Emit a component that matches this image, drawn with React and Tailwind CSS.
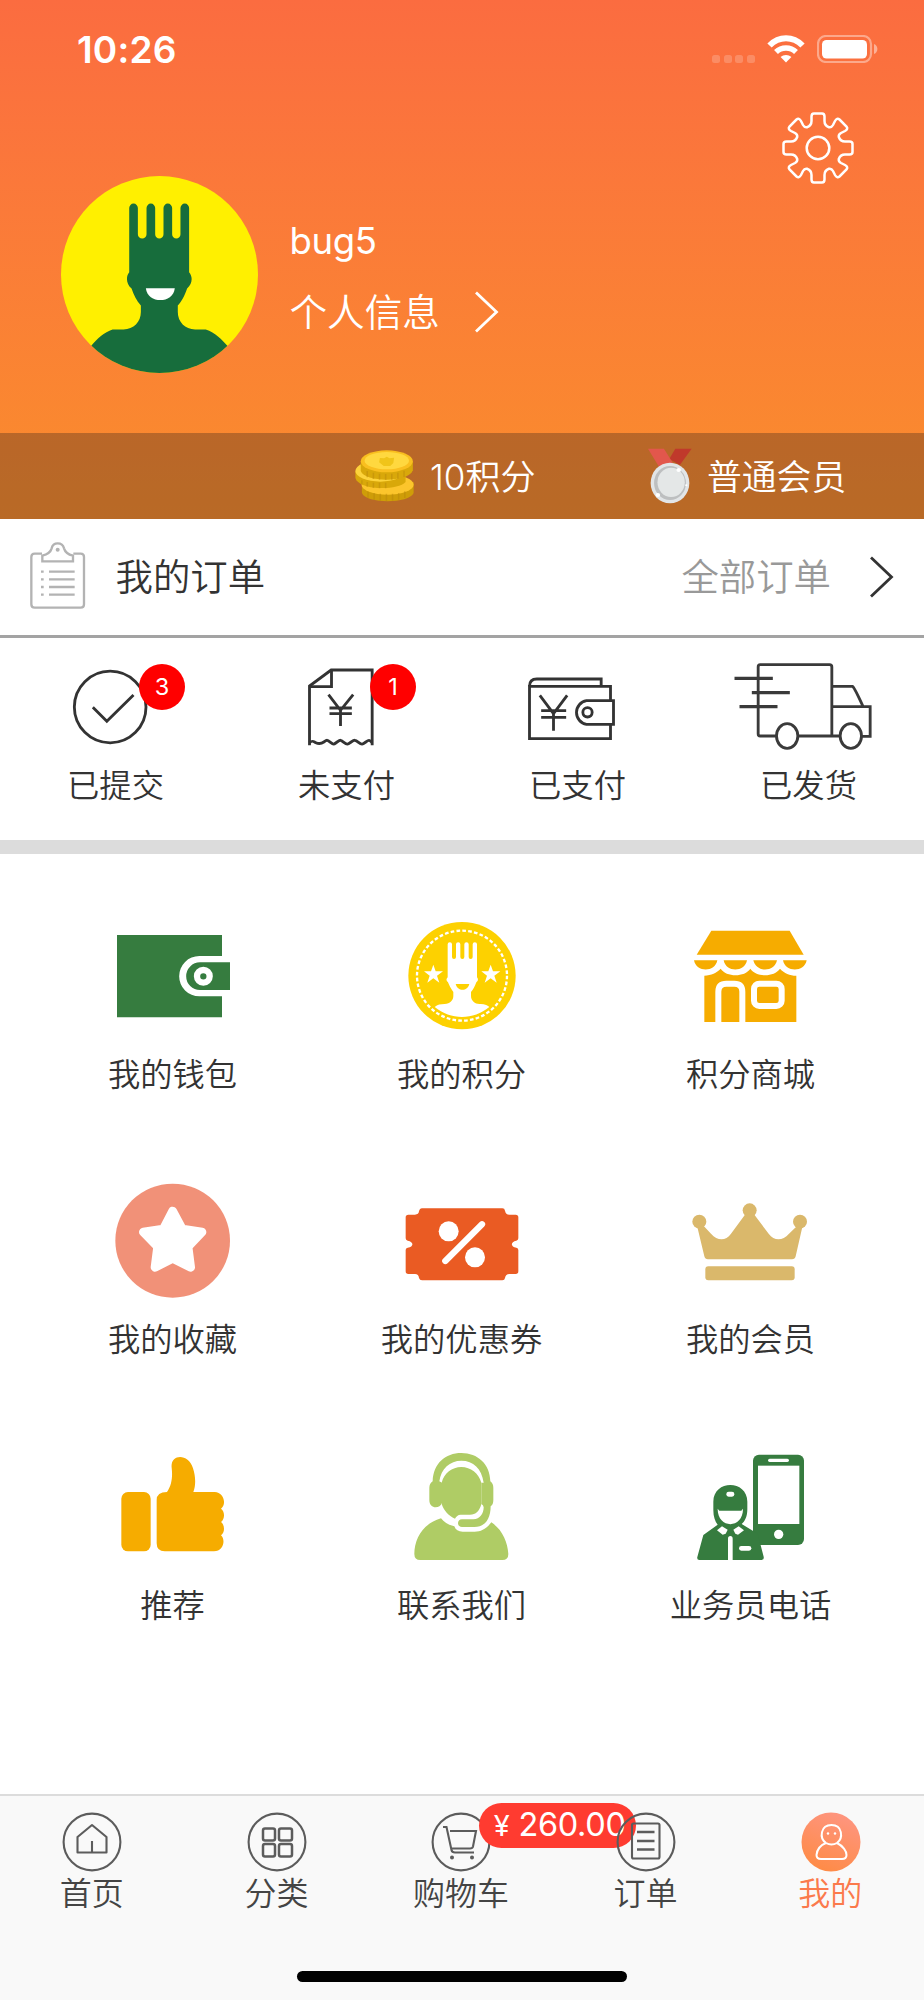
import clsx from "clsx";

/* ---------- header icons ---------- */

function WifiIcon() {
  return (
    <svg className="w-[38px] h-[28px]" viewBox="0 0 38 28" fill="none" stroke="white">
      <path d="M2.5 10.5 C12 0.8 26 0.8 35.5 10.5" strokeWidth="6" />
      <path d="M9 17 C14.5 11.5 23.5 11.5 29 17" strokeWidth="5.5" />
      <path d="M19 27.5 L13.6 22 C16.5 19.2 21.5 19.2 24.4 22 Z" fill="white" stroke="none" />
    </svg>
  );
}

function BatteryIcon() {
  return (
    <svg className="w-[61px] h-[28px]" viewBox="0 0 61 28" fill="none">
      <rect x="1" y="1" width="53" height="26" rx="8" stroke="white" strokeOpacity="0.4" strokeWidth="2.2" />
      <rect x="5" y="5" width="45" height="18.5" rx="4.5" fill="white" />
      <path d="M57 9 C61.5 10.5 61.5 17.5 57 19 Z" fill="white" fillOpacity="0.45" />
    </svg>
  );
}

function GearIcon() {
  return (
    <svg className="w-[74px] h-[74px]" viewBox="-37 -37 74 74" fill="none" stroke="white" strokeWidth="2.5">
      {[0, 90, 180, 270].map((deg) => (
        <path
          key={deg}
          transform={`rotate(${deg})`}
          d="M0 -34.5 H4 Q6.5 -34.5 6.5 -31.5 V-27 C6.5 -23.5 9 -21.5 11 -20.8 Q13.5 -20.3 15 -23 L17 -27 Q19 -30.5 21.5 -28.5 L28.5 -21.5 Q30.5 -19 27 -17 L23 -15 Q20.3 -13.5 20.8 -11 C21.5 -9 23.5 -6.5 27 -6.5 H31.5 Q34.5 -6.5 34.5 -4 V0"
        />
      ))}
      <circle r="11.3" />
    </svg>
  );
}

function Avatar() {
  return (
    <svg className="w-[197px] h-[197px]" viewBox="62 46 592 592">
      <clipPath id="avatar">
        <circle cx="358" cy="342" r="296" />
      </clipPath>
      <g clipPath="url(#avatar)">
        <rect x="62" y="46" width="592" height="592" fill="#fff000" />
        <path
          fill="#176d3c"
          d="M267 142 a13 13 0 0 1 26 0 V221 a13 13 0 0 0 26 0 V142 a13 13 0 0 1 26 0 V221 a12.5 13 0 0 0 25 0 V142 a13 13 0 0 1 26 0 V221 a12.5 13 0 0 0 25 0 V142 a13 13 0 0 1 26 0 V335 C458 347 458 370 441 384 C434 405 424 424 413 435 V455 C413 485 435 507 465 507 H497 C525 515 548 540 562 556 L600 650 H110 L153 556 C170 535 192 515 217 507 H250 C280 507 302 485 302 455 V435 C289 422 280 402 274 384 C257 370 257 347 267 335 Z"
        />
        <path fill="white" d="M317 383 H404 C399 431 322 431 317 383 Z" />
      </g>
    </svg>
  );
}

function Chevron({ className }) {
  return (
    <svg className={clsx("w-[25px] h-[42px]", className)} viewBox="0 0 25 42" fill="none" stroke="currentColor" strokeWidth="2.8">
      <path d="M2 1.5 L22.5 21 L2 40.5" />
    </svg>
  );
}

function CoinsIcon() {
  return (
    <svg className="w-[59px] h-[52px]" viewBox="90 89 154 156" preserveAspectRatio="none">
      {/* bottom coin */}
      <path d="M108 195 V218 C118 251 232 251 243 218 V185 Z" fill="#cf9d08" />
      <ellipse cx="175" cy="193" rx="68" ry="30" fill="#fcc52c" />
      {/* middle coin */}
      <path d="M91 152 V172 C98 210 200 212 222 185 V160 Z" fill="#d9a80a" />
      <ellipse cx="156" cy="152" rx="65" ry="32" fill="#fdd33c" />
      {/* top coin */}
      <path d="M105 124 V152 C115 187 232 187 241 150 V124 Z" fill="#d9a80a" />
      <ellipse cx="173" cy="123" rx="68" ry="33" fill="#f9bf1f" />
      <ellipse cx="173" cy="121" rx="58" ry="26" fill="#ffd83f" />
      <path d="M155 113 L166 114 L173 109 L180 114 L192 112 L190 128 L182 137 H165 L153 126 Z" fill="#f0c419" />
      <g stroke="#b8860b" strokeWidth="4" opacity="0.45">
        <path d="M122 152 V171 M138 157 V176 M154 160 V178 M170 161 V179 M186 160 V178 M202 157 V176 M218 151 V170" />
        <path d="M108 180 V192 M122 185 V199 M138 187 V203 M154 187 V204 M170 187 V204" />
        <path d="M124 214 V232 M140 218 V238 M156 220 V241 M172 220 V242 M188 220 V241 M204 218 V238 M220 213 V233" />
      </g>
    </svg>
  );
}

function MedalIcon() {
  return (
    <svg className="w-[44px] h-[56px]" viewBox="858 89 116 168" preserveAspectRatio="none">
      <path d="M930 91 H973 L942 140 L914 122 Z" fill="#c0392b" />
      <path d="M858 91 H900 L925 136 L887 145 Z" fill="#e2574c" />
      <ellipse cx="916" cy="194" rx="51" ry="61" fill="#e2e5e7" />
      <ellipse cx="916" cy="194" rx="42" ry="51" fill="#bdbfc0" />
      <ellipse cx="919" cy="192" rx="36" ry="44" fill="#e4e7e7" />
      <circle cx="939" cy="155" r="6" fill="white" />
      <circle cx="884" cy="230" r="6" fill="white" />
      <circle cx="959" cy="201" r="3" fill="white" />
    </svg>
  );
}

function ClipboardIcon() {
  return (
    <svg className="w-[58px] h-[70px]" viewBox="88 60 174 210" fill="none" stroke="#b3b3b3" strokeWidth="7">
      <path d="M127 98 H105 Q95 98 95 108 V250 Q95 260 105 260 H243 Q253 260 253 250 V108 Q253 98 243 98 H221" />
      <path d="M128 121 V104 C140 101 152 96 156 82 C160 62 188 62 193 82 C197 96 208 101 220 104 V121 Z" />
      <circle cx="174" cy="86" r="6" fill="#b3b3b3" stroke="none" />
      <path d="M148 152 H225 M148 175 H225 M148 198 H225 M148 221 H225" />
      <path d="M124 152 H132 M124 175 H132 M124 198 H132 M124 221 H132" />
    </svg>
  );
}

/* ---------- order status icons ---------- */

function SubmittedIcon() {
  return (
    <svg className="w-[150px] h-[100px]" viewBox="122.5 405 450 300" fill="none" stroke="#333" strokeWidth="8.5">
      <circle cx="330" cy="561" r="107.5" />
      <path d="M278 562 L320 604 L400 525" />
    </svg>
  );
}

function UnpaidIcon() {
  return (
    <svg className="w-[150px] h-[100px]" viewBox="816.5 405 450 300" fill="none" stroke="#333" strokeWidth="8.5">
      <path d="M929 676 V498 L994 450 H1117 V676" />
      <path d="M929 500 H995 V450" />
      <path d="M929 668 C938 660 940 664 948 668 S962 673 972 666 S982 659 992 667 S1002 673 1012 666 S1022 659 1032 667 S1044 673 1054 666 S1066 659 1076 667 S1088 673 1098 666 S1108 660 1117 668" />
      <path d="M986 524 L1022 571 L1060 524 M1022 571 V618 M989 564 H1056 M989 581 H1056" />
    </svg>
  );
}

function PaidIcon() {
  return (
    <svg className="w-[150px] h-[100px]" viewBox="123.5 405 450 300" fill="none" stroke="#333" strokeWidth="8.5">
      <path d="M446 541 V499 H203 V656 H446 V614" />
      <path d="M203 499 C203 484 212 477 225 477 H418 V499" />
      <path d="M455 542 H374 A36 36 0 0 0 374 613 H455 Z" />
      <circle cx="377" cy="577" r="14" />
      <path d="M234 526 L275 581 L316 526 M275 581 V632 M238 572 H313 M238 592 H313" />
    </svg>
  );
}

function ShippedIcon() {
  return (
    <svg className="w-[150px] h-[100px]" viewBox="814.5 407 450 300" fill="none" stroke="#3a3a3a" strokeWidth="8.5">
      <path d="M942 650 H893 Q887 650 887 643 V443 Q887 436 893 436 H1101 Q1108 436 1108 443 V650" />
      <path d="M1006 650 H1132 M1198 651 H1223 V562 H1110 M1110 501 H1170 Q1175 503 1201 560" />
      <ellipse cx="974" cy="650" rx="32" ry="37" />
      <ellipse cx="1165" cy="650" rx="32" ry="37" />
      <path d="M816 477 H931 M868 520 H982 M831 562 H945" strokeWidth="10" />
    </svg>
  );
}

/* ---------- menu icons ---------- */

function WalletIcon() {
  return (
    <svg className="size-[120px]" viewBox="69 48 360 360" fill="#367c3f">
      <path d="M81 105 H396 V168 H328 A60 60 0 0 0 328 289 H396 V352 H81 Z" />
      <path d="M420 187 H330 A41 41 0 0 0 330 270 H420 Z" />
      <circle cx="340" cy="229" r="19" fill="none" stroke="white" strokeWidth="19" />
    </svg>
  );
}

function PointsIcon() {
  return (
    <svg className="size-[120px]" viewBox="936 48 360 360">
      <circle cx="1116" cy="227" r="161" fill="#fdd100" />
      <circle cx="1116" cy="227" r="135" fill="none" stroke="white" strokeWidth="7" strokeDasharray="11 6.67" />
      <g fill="white">
        <path d="M1073 133 a6.5 6.5 0 0 1 13 0 V171 a6 6 0 0 0 12 0 V133 a6.5 6.5 0 0 1 13 0 V171 a6 6 0 0 0 12 0 V133 a6.5 6.5 0 0 1 13 0 V171 a6 6 0 0 0 12 0 V133 a6.5 6.5 0 0 1 13 0 V232 C1165 237 1165 242 1159 247 C1154 260 1150 268 1143 276 V288 C1143 302 1155 312 1168 312 C1183 311 1194 316 1198 321 C1150 361 1082 361 1034 321 C1042 314 1052 312 1064 312 C1080 312 1090 300 1090 288 V276 C1082 266 1077 254 1074 247 C1068 242 1068 237 1073 232 Z" />
        <path d="M1030 194 L1037 214 H1059 L1041 227 L1048 248 L1030 235 L1012 248 L1019 227 L1002 214 H1023 Z" />
        <path d="M1202 194 L1209 214 H1231 L1213 227 L1220 248 L1202 235 L1184 248 L1191 227 L1174 214 H1195 Z" />
      </g>
      <path d="M1097 252 H1138 C1133 275 1102 275 1097 252 Z" fill="#fdd100" />
    </svg>
  );
}

function StoreIcon() {
  return (
    <svg className="size-[120px]" viewBox="694 48 360 360" fill="#f6ac00">
      <path d="M755 92 H990 L1032 164 H711 Z" />
      <path d="M703 181 H773 C766 218 710 218 703 181 Z M792 181 H862 C855 218 799 218 792 181 Z M881 181 H952 C944 218 889 218 881 181 Z M970 181 H1041 C1034 218 977 218 970 181 Z" />
      <path d="M734 227 C755 226 771 218 783 206 C800 232 855 232 872 206 C890 232 943 232 961 206 C974 220 990 227 1010 227 V366 H734 Z" />
      <path d="M776 368 V275 Q776 251 800 251 H824 Q848 251 848 275 V368" fill="none" stroke="white" strokeWidth="18" />
      <rect x="883" y="251" width="83" height="67" rx="16" fill="none" stroke="white" strokeWidth="18" />
    </svg>
  );
}

function FavoriteIcon() {
  return (
    <svg className="size-[120px]" viewBox="69 65 360 360">
      <ellipse cx="248" cy="241" rx="172" ry="171" fill="#f19178" />
      <path
        d="M248 152 L277 206 L336 215 L294 259 L302 321 L248 294 L195 321 L203 259 L160 215 L220 206 Z"
        fill="white"
        stroke="white"
        strokeWidth="26"
        strokeLinejoin="round"
      />
    </svg>
  );
}

function CouponIcon() {
  return (
    <svg className="size-[120px]" viewBox="936 65 360 360">
      <path
        fill="#ea5b23"
        d="M996 144 H1237 Q1244 144 1245 151 Q1247 163 1258 163 H1277 Q1285 163 1285 171 V234 Q1285 240 1279 241 C1261 244 1261 259 1279 262 Q1285 263 1285 269 V333 Q1285 341 1277 341 H1258 Q1247 341 1245 353 Q1244 360 1237 360 H996 Q989 360 987 353 Q986 341 975 341 H955 Q947 341 947 333 V269 Q947 263 953 262 C972 259 972 244 953 241 Q947 240 947 234 V171 Q947 163 955 163 H975 Q986 163 987 153 Q989 144 996 144 Z"
      />
      <circle cx="1076" cy="213" r="30" fill="white" />
      <circle cx="1155" cy="291" r="30" fill="white" />
      <path d="M1176 192 L1066 302" stroke="white" strokeWidth="19" strokeLinecap="round" />
    </svg>
  );
}

function CrownIcon() {
  return (
    <svg className="size-[120px]" viewBox="693 65 360 360" fill="#dab86b">
      <circle cx="718" cy="184" r="21" />
      <circle cx="869" cy="150" r="21" />
      <circle cx="1020" cy="184" r="21" />
      <path d="M712 200 L734 200 L753 220 C773 242 797 242 813 220 L856 162 H882 L926 220 C943 242 967 242 987 220 L1008 200 H1027 L1007 288 Q1005 297 996 297 H744 Q735 297 733 288 Z" />
      <rect x="736" y="318" width="268" height="42" rx="9" />
    </svg>
  );
}

function ThumbIcon() {
  return (
    <svg className="size-[120px]" viewBox="69 51 360 360" fill="#f6ac00">
      <rect x="94" y="186" width="88" height="178" rx="20" />
      <path d="M231 186 C246 165 248 138 245 113 C240 72 295 68 309 115 C317 140 318 165 310 186 H374 C401 186 411 222 393 236 C405 244 405 268 393 276 C405 285 405 308 393 316 C408 330 400 364 372 364 H224 Q200 364 200 340 V210 Q200 186 231 186 Z" />
    </svg>
  );
}

function SupportIcon() {
  return (
    <svg className="size-[120px]" viewBox="936 51 360 360" fill="#afcc65">
      <path d="M1053 265 C1000 280 973 325 973 372 Q973 390 991 390 H1237 Q1255 390 1255 372 C1253 335 1236 298 1204 277 C1188 297 1174 305 1154 305 H1118 C1105 305 1097 300 1093 289 C1076 285 1062 277 1053 265 Z" />
      {/* head */}
      <path d="M1055 158 C1062 130 1086 111 1114 111 C1142 111 1166 130 1174 158 V222 C1169 243 1157 254 1140 254 H1112 C1104 254 1098 259 1095 266 C1075 257 1062 242 1055 222 Z" />
      {/* headset */}
      <path d="M1028 154 C1030 100 1066 69 1114 69 C1163 69 1200 102 1201 154 Q1210 160 1210 174 V210 Q1210 224 1202 229 C1202 266 1186 291 1153 291 H1116 C1100 291 1100 268 1116 268 H1150 C1170 268 1181 250 1181 232 Q1180 224 1174 222 V158 H1181 C1175 115 1150 92 1114 92 C1080 92 1053 116 1048 154 L1056 158 V218 C1050 237 1018 238 1018 210 V174 Q1018 160 1028 154 Z" />
    </svg>
  );
}

function SalesmanIcon() {
  return (
    <svg className="size-[120px]" viewBox="693 51 360 360" fill="#367c3f">
      <rect x="879" y="74" width="153" height="271" rx="18" />
      <rect x="894" y="107" width="124" height="175" fill="white" />
      <rect x="924" y="86" width="63" height="10" rx="5" fill="white" />
      <circle cx="956" cy="313" r="14" fill="white" />
      <path d="M760 215 C760 148 862 148 862 215 V238 C862 262 853 276 845 282 L893 311 L911 380 Q913 390 905 390 H718 Q710 390 712 381 L730 315 L773 284 C765 274 760 260 760 240 Z" />
      <path d="M773 236 L778 242 H844 L849 236 C850 298 772 298 773 236 Z" fill="white" />
      <rect x="799" y="185" width="24" height="15" rx="7" fill="white" />
      <path d="M786 289 L803 299 L797 311 L788 314 L771 301 Z M836 289 L820 299 L826 311 L834 314 L852 301 Z" fill="white" />
      <path d="M804 392 V326 Q804 318 811 318 Q818 318 818 326 V392 Z" fill="white" />
      <rect x="837" y="348" width="37" height="14" rx="7" fill="white" />
    </svg>
  );
}

/* ---------- tab bar icons, drawn round the origin ---------- */

function TabIcon({ children }) {
  return (
    <svg className="size-[60px]" viewBox="-30 -30 60 60" fill="none" stroke="#5c5c5c" strokeWidth="2.1">
      <circle r="28.4" />
      {children}
    </svg>
  );
}

const tabs = [
  {
    label: "首页",
    icon: (
      <TabIcon>
        <path d="M0 -17 L-14.5 -5 V10.5 H14.5 V-5 Z M0 -1 V10.5" strokeLinejoin="round" />
      </TabIcon>
    ),
  },
  {
    label: "分类",
    icon: (
      <TabIcon>
        <g strokeWidth="2.5">
          <rect x="-14" y="-13.5" width="12" height="12" rx="2" />
          <rect x="2" y="-13.5" width="13" height="12" rx="2" />
          <rect x="-14" y="2" width="12" height="12.5" rx="2" />
          <rect x="2" y="2" width="13" height="12.5" rx="2" />
        </g>
      </TabIcon>
    ),
  },
  {
    label: "购物车",
    icon: (
      <TabIcon>
        <path d="M-18 -15 H-14.5 L-9.5 8 Q-9 10.5 -6 10.5 H13 M-11 -11 H15 L12 4.5 Q11.5 6.5 9 6.5 H-10" />
        <circle cx="-9" cy="15.5" r="2" fill="#5c5c5c" stroke="none" />
        <circle cx="11" cy="15.5" r="2" fill="#5c5c5c" stroke="none" />
      </TabIcon>
    ),
  },
  {
    label: "订单",
    icon: (
      <TabIcon>
        <rect x="-14" y="-18.5" width="27.5" height="35" rx="1.5" />
        <path d="M-9 -10 H8.5 M-9 -1 H8.5 M-9 7.5 H8.5" strokeWidth="2.4" />
      </TabIcon>
    ),
  },
  {
    label: "我的",
    active: true,
    icon: (
      <svg className="size-[60px]" viewBox="-30 -30 60 60" fill="none" stroke="white" strokeWidth="2">
        <defs>
          <linearGradient id="mine" x1="0.7" y1="0" x2="0.3" y2="1">
            <stop offset="0" stopColor="#fe9580" />
            <stop offset="1" stopColor="#fe8b45" />
          </linearGradient>
        </defs>
        <circle r="29.5" fill="url(#mine)" stroke="none" />
        <path d="M-5 1 C-12 -4 -10.5 -17 0.5 -17 C11.5 -17 12.5 -4 6 1 C12 4 15.5 9 15.5 13 Q15.5 17 11 17 H-10 Q-14.5 17 -14.5 13 C-14 8 -11.5 3.5 -5 1 C-1.5 3 2.5 3 6 1" />
        <circle cx="-3" cy="-8.5" r="1.2" fill="white" stroke="none" />
        <circle cx="4" cy="-8.5" r="1.2" fill="white" stroke="none" />
      </svg>
    ),
  },
];

const orderStates = [
  { label: "已提交", Icon: SubmittedIcon, count: 3 },
  { label: "未支付", Icon: UnpaidIcon, count: 1 },
  { label: "已支付", Icon: PaidIcon },
  { label: "已发货", Icon: ShippedIcon },
];

const menu = [
  { label: "我的钱包", Icon: WalletIcon },
  { label: "我的积分", Icon: PointsIcon },
  { label: "积分商城", Icon: StoreIcon },
  { label: "我的收藏", Icon: FavoriteIcon },
  { label: "我的优惠券", Icon: CouponIcon },
  { label: "我的会员", Icon: CrownIcon },
  { label: "推荐", Icon: ThumbIcon },
  { label: "联系我们", Icon: SupportIcon },
  { label: "业务员电话", Icon: SalesmanIcon },
];

export default function App() {
  return (
    <div className="w-[924px] h-[2000px] flex flex-col overflow-hidden bg-white text-[#333] font-[350] whitespace-nowrap leading-none font-['Inter','Noto_Sans_CJK_SC',sans-serif]">
      {/* Header */}
      <header className="h-[519px] shrink-0 flex flex-col bg-linear-to-b from-[#fb6c40] to-[#fa8d2b] text-white">
        <div className="h-[98px] pl-[77px] pr-[46px] flex items-center justify-between">
          <span className="pt-px text-[37px] font-semibold tracking-[0.005em]">10:26</span>
          <div className="flex items-center">
            <div className="flex gap-[3.6px] pt-[20px] mr-[12px]">
              {[0, 1, 2, 3].map((i) => (
                <span key={i} className="w-[8px] h-[8px] rounded-[2.5px] bg-white/20" />
              ))}
            </div>
            <WifiIcon />
            <span className="w-[12px]" />
            <BatteryIcon />
          </div>
        </div>

        <div className="h-[335px] pl-[60.5px] pr-[69.5px] flex justify-between">
          <div className="flex pt-[77.5px]">
            <Avatar />
            <div className="ml-[32px] pt-[47px]">
              <p className="text-[36.5px] leading-[36px] font-normal tracking-[-0.01em]">bug5</p>
              <p className="mt-[32px] flex items-center text-[37.6px] leading-[44px]">
                个人信息
                <Chevron className="ml-[34px] mb-[3px]" />
              </p>
            </div>
          </div>
          <div className="pt-[13px]">
            <GearIcon />
          </div>
        </div>

        <div className="h-[86px] pl-[355px] flex items-center bg-[#241c1a]/30 text-[35px]">
          <CoinsIcon />
          <span className="ml-[16px] w-[218px] pt-[2px]">10积分</span>
          <MedalIcon />
          <span className="ml-[15px] pt-[2px] text-[34.8px]">普通会员</span>
        </div>
      </header>

      {/* Orders */}
      <div className="h-[119px] shrink-0 pl-[29px] pr-[30px] flex items-center border-b-[3px] border-[#a3a3a3] text-[37.4px]">
        <div className="pb-[3px]">
          <ClipboardIcon />
        </div>
        <span className="ml-[28.5px] pt-[2px] flex-1">我的订单</span>
        <span className="pt-[2px] text-[#999]">全部订单</span>
        <Chevron className="ml-[38px]" />
      </div>

      <div className="h-[202px] shrink-0 grid grid-cols-4">
        {orderStates.map(({ label, Icon, count }) => (
          <div key={label} className="relative flex flex-col items-center pt-[17px]">
            <Icon />
            <span className="mt-[10px] text-[32.3px] leading-[42px]">{label}</span>
            {count && (
              <span className="absolute left-[139px] top-[26px] size-[46px] rounded-full bg-[#ff0000] text-white text-[23.5px] font-normal flex items-center justify-center">
                {count}
              </span>
            )}
          </div>
        ))}
      </div>
      <div className="h-[14px] shrink-0 bg-[#dcdcdc]" />

      {/* Menu */}
      <div className="flex-1 px-[28.5px] pt-[62px] grid grid-cols-3 auto-rows-[265.5px] content-start">
        {menu.map(({ label, Icon }) => (
          <div key={label} className="flex flex-col items-center">
            <Icon />
            <span className="mt-[17.5px] mr-px text-[32.3px] leading-[42px]">{label}</span>
          </div>
        ))}
      </div>

      {/* Tab bar */}
      <nav className="h-[206px] shrink-0 flex flex-col items-center border-t-2 border-[#dcdcdc] bg-[#f9f9f9]">
        <div className="w-full h-[175px] pr-px grid grid-cols-5 text-[32px] text-[#444]">
          {tabs.map((tab, i) => (
            <div
              key={tab.label}
              className={clsx("relative flex flex-col items-center pt-[15.5px]", tab.active && "text-[#fb7a4c]")}
            >
              {/* cart total, tucked under the order icon */}
              {i === 3 && (
                <span className="absolute left-[-75px] top-[7px] w-[157px] h-[45px] rounded-full bg-[#ff3b30] text-white text-[32.5px] font-normal tracking-[-0.01em] pl-[15px] flex items-center">
                  <span className="mr-[9px] text-[29px]">¥</span>260.00
                </span>
              )}
              <span className="relative">{tab.icon}</span>
              <span className="mt-[1.5px] mr-px leading-[42px]">{tab.label}</span>
            </div>
          ))}
        </div>
        <div className="w-[330px] h-[11px] rounded-full bg-black" />
      </nav>
    </div>
  );
}
